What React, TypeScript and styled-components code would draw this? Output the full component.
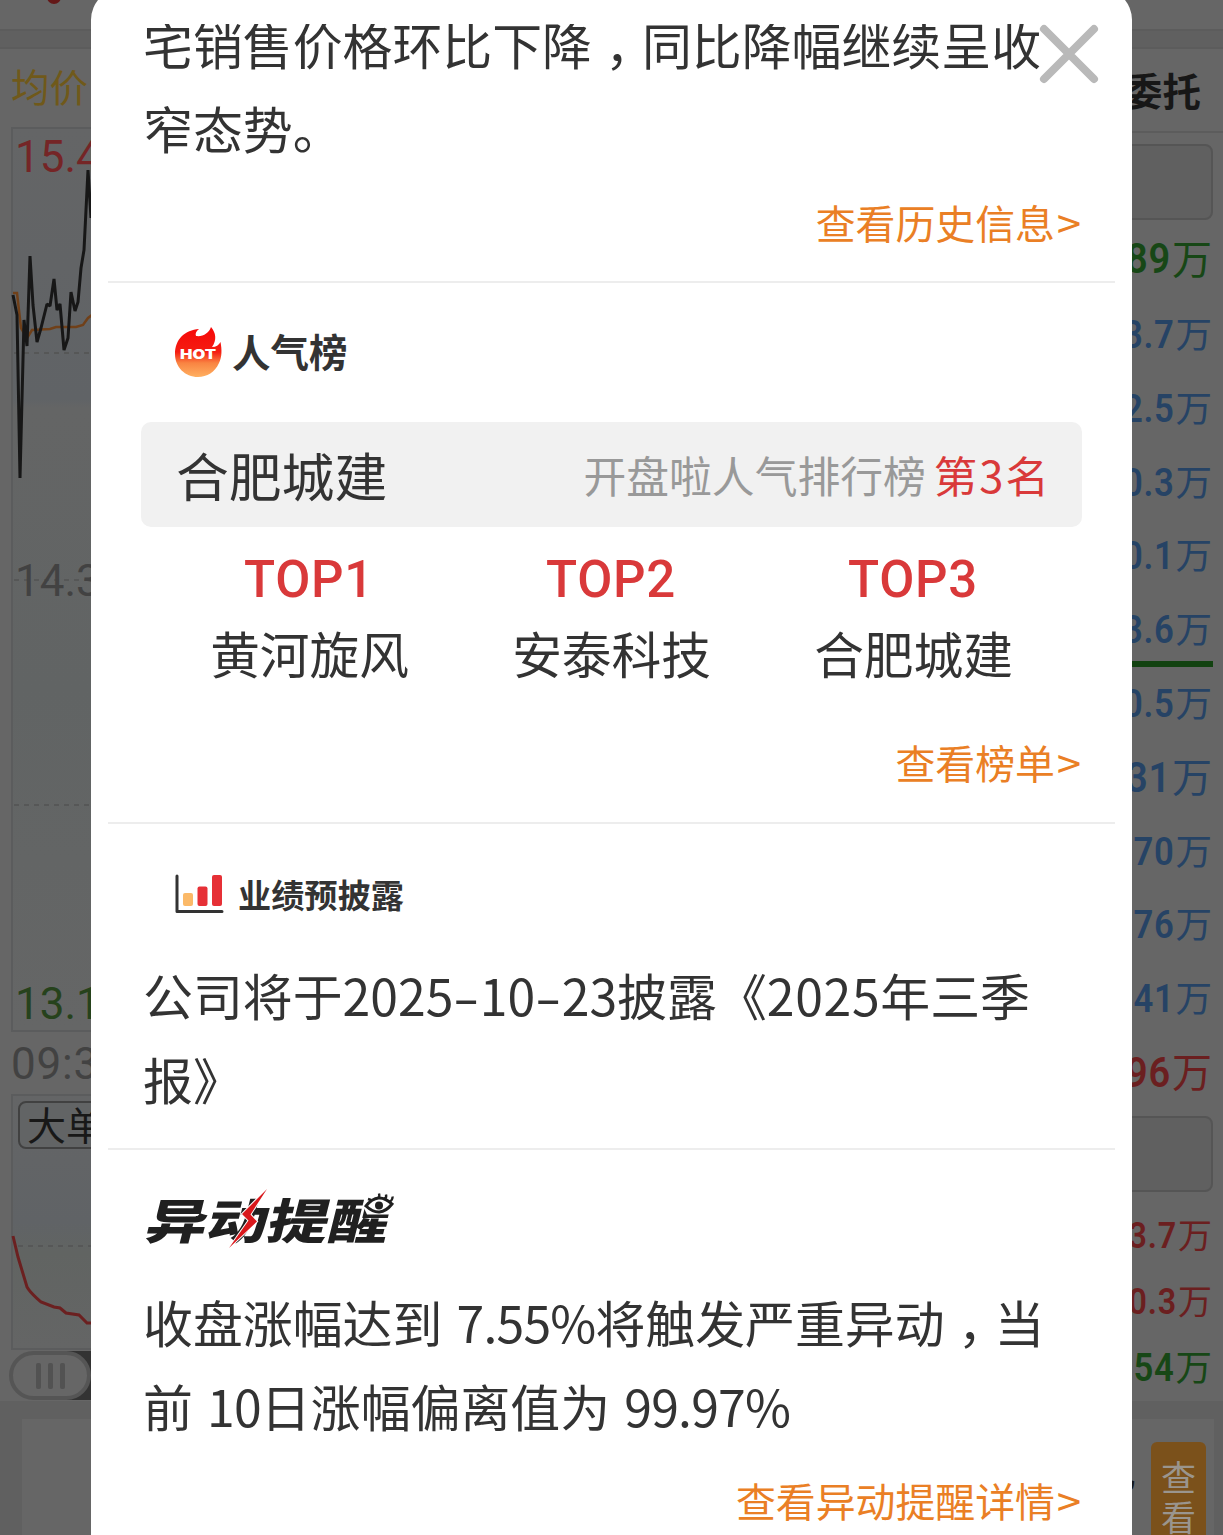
import React from "react";
import styled, { createGlobalStyle } from "styled-components";

const cjk = `"Noto Sans CJK SC", sans-serif`;

const Global = createGlobalStyle`
  * { box-sizing: border-box; }
  body { margin: 0; background: #666; font-family: ${cjk}; }
`;

const Screen = styled.div`
  position: relative;
  width: 1223px;
  height: 1535px;
  overflow: hidden;
  display: flex;
  flex-direction: column;
  background: #666;
`;

const TopBar = styled.div`
  height: 29px;
  padding-left: 47px;
  flex: none;
`;

const Dot = styled.div`
  width: 14px;
  height: 14px;
  margin-top: -10px;
  border-radius: 50%;
  background: #641818;
`;

const Strip = styled.div`
  flex: none;
  height: 20px;
  background: #606060;
  border-top: 2px solid #5c5c5c;
  border-bottom: 2px solid #5c5c5c;
`;

const Columns = styled.div`
  flex: none;
  height: 1352px;
  display: flex;
  justify-content: space-between;
`;

const ChartColumn = styled.div`
  width: 150px;
  padding-left: 11px;
  overflow: hidden;
`;

const Average = styled.div`
  height: 78px;
  line-height: 73px;
  font-size: 38.5px;
  color: #70591a;
  white-space: nowrap;
`;

const PriceChart = styled.div`
  height: 905px;
  border: 2px solid #5b5c5d;
  background: linear-gradient(#646566 0%, #606366 30%, #646565 31%, #616464 62%, #656666 100%);
  display: grid;
`;

const ChartSvg = styled.svg`
  grid-area: 1 / 1;
  display: block;
  margin: -2px 0 0 -2px;
`;

const PriceLabels = styled.div`
  grid-area: 1 / 1;
  display: flex;
  flex-direction: column;
  justify-content: space-between;
  padding: 2px 0 0 2px;
`;

const Num = styled.div<{ $color: string }>`
  font: 400 44px/52px Roboto, sans-serif;
  color: ${(p) => p.$color};
`;

const Clock = styled(Num)`
  height: 62px;
  line-height: 64px;
  letter-spacing: 0.8px;
`;

const VolumeChart = styled.div`
  height: 256px;
  border: 2px solid #5b5c5d;
  padding: 5px 0 0 5px;
  background: linear-gradient(#646566, #606366 50%, #616462 62%, #646565);
`;

const VolumeTag = styled.div`
  width: 160px;
  height: 48px;
  padding-left: 7px;
  border: 2px solid #414141;
  border-radius: 8px;
  background: #626465;
  color: #181818;
  font-size: 39px;
  line-height: 40px;
`;

const VolumeSvg = styled.svg`
  display: block;
  margin-left: -7px;
`;

const SliderTrack = styled.div`
  height: 49px;
  margin: 1px 0 0 -2px;
  background: linear-gradient(90deg, #666 55px, #333 56px);
`;

const SliderThumb = styled.div`
  width: 82px;
  height: 49px;
  border: 4px solid #555;
  border-radius: 25px;
  background: #666;
  display: flex;
  align-items: center;
  justify-content: center;
  gap: 7px;
`;

const Grip = styled.span`
  width: 5px;
  height: 26px;
  border-radius: 2px;
  background: #525252;
`;

const OrderColumn = styled.div`
  width: 140px;
  overflow: hidden;
  display: flex;
  flex-direction: column;
`;

const OrderTitle = styled.div`
  flex: none;
  height: 84px;
  padding-right: 22px;
  border-bottom: 2px solid #5c5c5c;
  text-align: right;
  font-weight: 700;
  font-size: 38.5px;
  line-height: 80px;
  color: #171717;
`;

const FieldBox = styled.div<{ $top: number; $bottom: number }>`
  flex: none;
  height: 76px;
  margin: ${(p) => p.$top}px 10px ${(p) => p.$bottom}px 0;
  border: 2px solid #555;
  border-radius: 8px;
  background: #606060;
`;

const Amount = styled.div<{ $color: string; $size: number; $h: number }>`
  flex: none;
  height: ${(p) => p.$h}px;
  line-height: ${(p) => p.$h}px;
  padding-right: 11px;
  display: flex;
  justify-content: flex-end;
  white-space: nowrap;
  color: ${(p) => p.$color};
  font-size: ${(p) => p.$size}px;
  b {
    font-family: Roboto, sans-serif;
    font-weight: 600;
    font-size: 1.08em;
    letter-spacing: 0.8px;
    margin-right: 1px;
    padding-top: 2px;
    transform: scaleX(0.88);
    transform-origin: right;
  }
`;

const PriceBar = styled.div`
  flex: none;
  height: 6px;
  margin: -4px 10px -2px 0;
  background: #124210;
`;

const Footer = styled.div`
  flex: 1;
  padding: 18px 9px 0 22px;
  background: #606060;
`;

const FooterCard = styled.div`
  height: 140px;
  padding: 23px 8px 0;
  background: #666;
  display: flex;
  justify-content: flex-end;
  gap: 16px;
`;

const FooterText = styled.span`
  font-size: 40px;
  line-height: 54px;
  font-weight: 700;
  color: #171717;
`;

const ViewButton = styled.div`
  width: 55px;
  height: 130px;
  padding: 14px 10px 0;
  border-radius: 6px 6px 0 0;
  background: #7b511b;
  color: #9a958e;
  font-size: 35px;
  line-height: 40px;
`;

const Sheet = styled.section`
  position: absolute;
  top: -12px;
  left: 91px;
  width: 1041px;
  height: 1560px;
  padding-top: 36px;
  border-radius: 32px 32px 0 0;
  background: #fff;
  color: #333;
`;

const Scroll = styled.div`
  height: 1511px;
  overflow: hidden;
`;

const Section = styled.div<{ $h: number; $shift?: number }>`
  height: ${(p) => p.$h}px;
  margin: ${(p) => p.$shift ?? 0}px 17px 0;
  padding: 0 33px 0 35px;
  border-bottom: 2px solid #ededed;
  display: flex;
  flex-direction: column;
`;

const Paragraph = styled.p<{ $top: number }>`
  margin: ${(p) => p.$top}px 0 0;
  font-size: 49.9px;
  line-height: 84.3px;
  word-spacing: 3px;
  white-space: nowrap;
`;

const Latin = styled.span<{ $gap: number }>`
  letter-spacing: ${(p) => p.$gap}px;
`;

const Dash = styled.span`
  display: inline-block;
  width: 26.5px;
  line-height: 1;
  text-align: center;
  transform: scaleX(1.55);
`;

const Comma = styled.span`
  margin: 0 -13px 0 13px;
`;

const More = styled.a<{ $top: number }>`
  margin: ${(p) => p.$top}px 0 0;
  align-self: flex-end;
  font-size: 39.9px;
  line-height: 60px;
  color: #ea7f25;
  white-space: nowrap;
`;

const Chevron = styled.span`
  display: inline-block;
  width: 26px;
  margin-right: 1px;
  text-align: right;
  line-height: 1;
  transform: scaleX(1.1);
  transform-origin: right;
`;

const Heading = styled.div<{ $top: number; $size: number; $gap: number; $lh: number }>`
  height: 60px;
  margin: ${(p) => p.$top}px 0 0 31px;
  display: flex;
  align-items: center;
  gap: ${(p) => p.$gap}px;
  font-weight: 700;
  font-size: ${(p) => p.$size}px;
  line-height: ${(p) => p.$lh}px;
  span { height: 60px; }
`;

const RankBar = styled.div`
  height: 105px;
  margin: 40px 0 0 -2px;
  padding: 0 35px;
  border-radius: 10px;
  background: #f1f1f1;
  display: flex;
  align-items: center;
  justify-content: space-between;
  line-height: 105px;
  white-space: nowrap;
`;

const StockName = styled.span`
  font-size: 52.8px;
`;

const RankNote = styled.span`
  font-size: 42.8px;
  color: #999;
`;

const Rank = styled.span`
  margin-left: 8px;
  color: #d9393a;
  font-size: 43.5px;
  letter-spacing: 2px;
  margin-right: -4px;
`;

const TopGrid = styled.div`
  display: grid;
  grid-template-columns: repeat(3, 302px);
  justify-content: center;
  margin: 15px 0 0 -2px;
  text-align: center;
`;

const TopLabel = styled.div`
  font: 500 51px/76px Roboto, sans-serif;
  letter-spacing: 0.7px;
  margin-left: -1px;
  color: #d9393a;
`;

const TopName = styled.div`
  font-size: 49.7px;
  line-height: 68px;
  height: 72px;
`;

const AlertLogo = styled.svg`
  display: block;
  margin: 34px 0 0 -4px;
  flex: none;
`;

const Close = styled.svg`
  position: absolute;
  left: 947px;
  top: 35px;
`;

const blue = "#264365";
const red = "#6b1f20";
const green = "#174716";

const orders = [
  { n: "89", c: green, s: 40, h: 78 },
  { n: "3.7", c: blue, s: 36.5, h: 73.8 },
  { n: "2.5", c: blue, s: 36.5, h: 73.8 },
  { n: "0.3", c: blue, s: 36.5, h: 73.8 },
  { n: "0.1", c: blue, s: 36.5, h: 73.8 },
  { n: "3.6", c: blue, s: 36.5, h: 73.8, bar: true },
  { n: "0.5", c: blue, s: 36.5, h: 73.8 },
  { n: "31", c: blue, s: 40, h: 73.8 },
  { n: "70", c: blue, s: 36.5, h: 73.8 },
  { n: "76", c: blue, s: 36.5, h: 73.8 },
  { n: "41", c: blue, s: 36.5, h: 73.8 },
  { n: "96", c: red, s: 40, h: 73.8 },
];

const totals = [
  { n: "3.7", c: red, s: 34 },
  { n: "0.3", c: red, s: 34 },
  { n: "54", c: green, s: 36.5 },
];

function HotIcon() {
  return (
    <svg width="48" height="52" viewBox="0 0 48 52">
      <defs>
        <linearGradient id="hot" x1="0" y1="0" x2="0" y2="1">
          <stop offset="0" stopColor="#f60808" />
          <stop offset="0.5" stopColor="#f51d12" />
          <stop offset="0.72" stopColor="#f98442" />
          <stop offset="1" stopColor="#ffb061" />
        </linearGradient>
      </defs>
      <path
        fill="url(#hot)"
        d="M25 3C22 5 21 8 22 10C29 11 35 7 37 1C42 7 43 14 38 21C42 21 45 19 46.500 16C48 24 48 31 45 37C41 46 33 51 24 51C11 51 1 41 1 28C1 13 11 4 25 3Z"
      />
      <text x="24" y="32.5" textAnchor="middle" textLength="36" lengthAdjust="spacingAndGlyphs" fontFamily="Inter, sans-serif" fontWeight="900" fontSize="13" fill="#fff">
        HOT
      </text>
    </svg>
  );
}

function BarsIcon() {
  return (
    <svg width="50" height="40" viewBox="0 0 50 40">
      <path d="M3 2V37.500H48" fill="none" stroke="#333" strokeWidth="3" strokeLinecap="round" strokeLinejoin="round" />
      <rect x="9" y="19" width="10" height="13" rx="2" fill="#fbb968" />
      <rect x="23.500" y="12.500" width="10" height="19.500" rx="2" fill="#e63036" />
      <rect x="38" y="1" width="10" height="31" rx="2" fill="#e63036" />
    </svg>
  );
}

function MoreLink({ top, children }: { top: number; children: React.ReactNode }) {
  return (
    <More $top={top}>
      {children}
      <Chevron>&gt;</Chevron>
    </More>
  );
}

export default function App() {
  return (
    <Screen>
      <Global />
      <TopBar>
        <Dot />
      </TopBar>
      <Strip />
      <Columns>
        <ChartColumn>
          <Average>均价</Average>
          <PriceChart>
            <ChartSvg width="139" height="900" viewBox="11 127 139 900">
              <path d="M14 353H150M14 580H150M14 805H150" stroke="#565757" strokeWidth="2" strokeDasharray="5 5" />
              <path d="M13 293H17L21 328L27 338L32 330L50 329L56 327H76L83 325L88 318L96 312" fill="none" stroke="#704019" strokeWidth="2.500" />
              <path
                d="M13 295L17 315L20 478L24 320L27 346L30 256L33 305L37 342L41 328L47 304L50 306L54 279L57 310L60 304L64 350L68 338L71 292L75 311L78 302L81 268L84 250L88 170L91 218"
                fill="none"
                stroke="#171717"
                strokeWidth="3"
                strokeLinejoin="bevel"
              />
            </ChartSvg>
            <PriceLabels>
              <Num $color="#752526">15.4</Num>
              <Num $color="#424242">14.3</Num>
              <Num $color="#26421c">13.1</Num>
            </PriceLabels>
          </PriceChart>
          <Clock $color="#424242">09:3</Clock>
          <VolumeChart>
            <VolumeTag>大单</VolumeTag>
            <VolumeSvg width="139" height="195" viewBox="11 1149 139 195">
              <path d="M18 1246H150" stroke="#565757" strokeWidth="2" strokeDasharray="5 5" />
              <path d="M13 1236L18 1257L27 1287C31 1294 36 1297 41 1302L54 1307L60 1308L66 1313L79 1315L87 1323H100" fill="none" stroke="#6b2020" strokeWidth="3" />
            </VolumeSvg>
          </VolumeChart>
          <SliderTrack>
            <SliderThumb>
              <Grip />
              <Grip />
              <Grip />
            </SliderThumb>
          </SliderTrack>
        </ChartColumn>
        <OrderColumn>
          <OrderTitle>委托</OrderTitle>
          <FieldBox $top={11} $bottom={-2} />
          {orders.map((o, i) => (
            <React.Fragment key={i}>
              <Amount $color={o.c} $size={o.s} $h={o.h}>
                <b>{o.n}</b>万
              </Amount>
              {o.bar && <PriceBar />}
            </React.Fragment>
          ))}
          <FieldBox $top={8} $bottom={9} />
          {totals.map((o) => (
            <Amount key={o.n} $color={o.c} $size={o.s} $h={66}>
              <b>{o.n}</b>万
            </Amount>
          ))}
        </OrderColumn>
      </Columns>
      <Footer>
        <FooterCard>
          <FooterText>况</FooterText>
          <ViewButton>
            查<br />看
          </ViewButton>
        </FooterCard>
      </Footer>

      <Sheet>
        <Scroll>
          <Section $h={282} $shift={-23}>
            <Paragraph $top={0}>
              宅销售价格环比下降<Comma>，</Comma>同比降幅继续呈收
              <br />
              窄态势。
            </Paragraph>
            <MoreLink top={22}>查看历史信息</MoreLink>
          </Section>
          <Section $h={541}>
            <Heading $top={39} $size={38.5} $gap={10} $lh={56}>
              <HotIcon />
              <span>人气榜</span>
            </Heading>
            <RankBar>
              <StockName>合肥城建</StockName>
              <RankNote>
                开盘啦人气排行榜<Rank>第3名</Rank>
              </RankNote>
            </RankBar>
            <TopGrid>
              <TopLabel>TOP1</TopLabel>
              <TopLabel>TOP2</TopLabel>
              <TopLabel>TOP3</TopLabel>
              <TopName>黄河旋风</TopName>
              <TopName>安泰科技</TopName>
              <TopName>合肥城建</TopName>
            </TopGrid>
            <MoreLink top={42}>查看榜单</MoreLink>
          </Section>
          <Section $h={326}>
            <Heading $top={40} $size={33.2} $gap={14} $lh={60}>
              <BarsIcon />
              <span>业绩预披露</span>
            </Heading>
            <Paragraph $top={28}>
              公司将于<Latin $gap={0}>2025<Dash>-</Dash>10<Dash>-</Dash>23</Latin>披露《<Latin $gap={0.7}>2025</Latin>年三季
              <br />
              报》
            </Paragraph>
          </Section>
          <Section $h={420}>
            <AlertLogo width="260" height="66" viewBox="140 1184 260 66">
              <g transform="translate(143 1240) skewX(-14) scale(1 0.94)">
                <text x="1" y="-1" textLength="243" lengthAdjust="spacingAndGlyphs" fontFamily="Noto Sans CJK SC, sans-serif" fontWeight="900" fontSize="51" fill="#202020">
                  异动提醒
                </text>
              </g>
              <path d="M268 1189L243 1214L249.500 1220.500L230 1248L258 1221.500L251.500 1214.500Z" fill="#d9181c" stroke="#fff" strokeWidth="2" paintOrder="stroke" />
              <path d="M371 1190H400V1210L390 1214.500H368L364 1206Z" fill="#fff" />
              <path d="M367 1206Q379 1191 393 1204Q381 1219 367 1206Z" fill="#fff" stroke="#202020" strokeWidth="3" />
              <circle cx="380" cy="1205.500" r="4" fill="#202020" />
              <path d="M372 1200L369 1199M379 1198Q381 1197 380 1193.500M385 1199Q388 1198 387 1194.500M390 1202Q394 1200 393.500 1196.500" fill="none" stroke="#202020" strokeWidth="2.400" />
            </AlertLogo>
            <Paragraph $top={29}>
              收盘涨幅达到 <Latin $gap={-0.8}>7.55%</Latin>将触发严重异动<Comma>，</Comma>当
              <br />前 <Latin $gap={-0.8}>10</Latin>日涨幅偏离值为 <Latin $gap={-0.8}>99.97%</Latin>
            </Paragraph>
            <MoreLink top={22}>查看异动提醒详情</MoreLink>
          </Section>
        </Scroll>
        <Close width="62" height="62" viewBox="0 0 62 62">
          <path d="M6 6L56 56M56 6L6 56" stroke="#b9b9b9" strokeWidth="8" strokeLinecap="round" />
        </Close>
      </Sheet>
    </Screen>
  );
}
